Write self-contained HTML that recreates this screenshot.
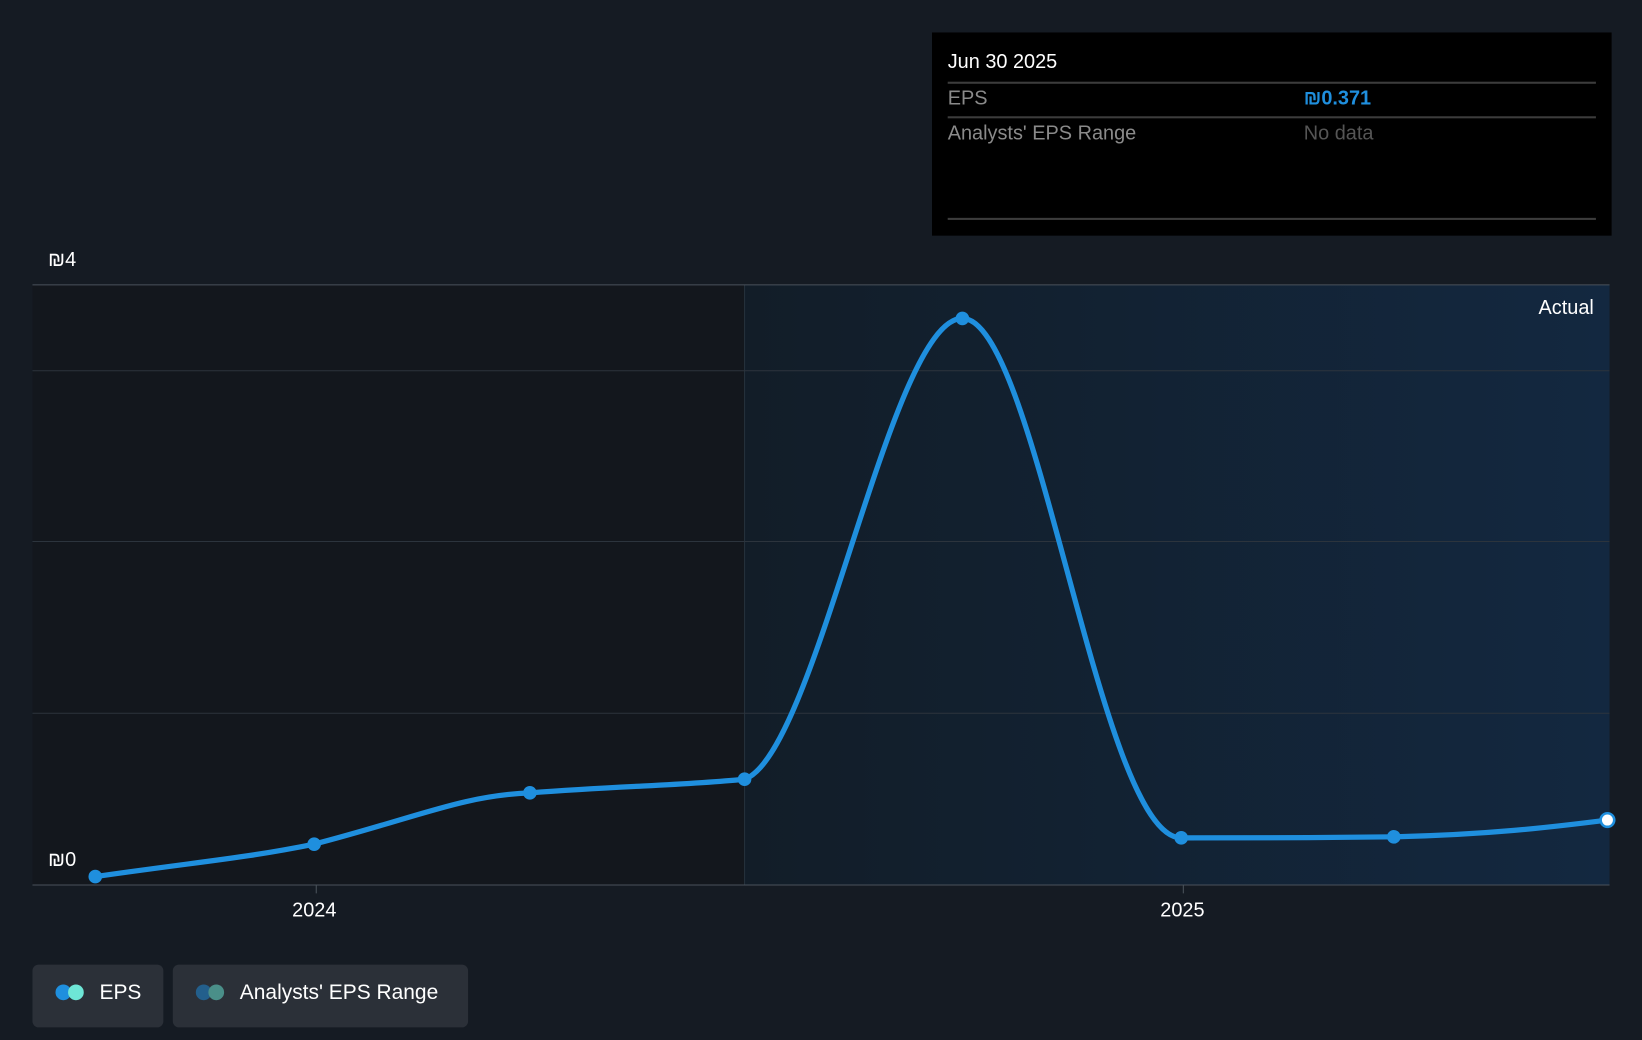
<!DOCTYPE html>
<html><head><style>
html,body{margin:0;padding:0;background:#151b23;width:1642px;height:1040px;overflow:hidden}
#w{position:absolute;left:0;top:0;width:1568px;height:993px;transform:scale(1.04719,1.04733);transform-origin:0 0;font-family:"Liberation Sans",sans-serif;color:#fff}
.t{position:absolute;white-space:nowrap}
</style></head><body><div id="w">
<svg width="1568" height="993" style="position:absolute;left:0;top:0">
<defs><linearGradient id="g" x1="0" x2="1" y1="0" y2="0"><stop offset="0" stop-color="#121d28"/><stop offset="1" stop-color="#132840"/></linearGradient></defs>
<rect x="31" y="272" width="680" height="573" fill="#13171d"/>
<rect x="711" y="272" width="826" height="573" fill="url(#g)"/>
<line x1="711" y1="272" x2="711" y2="845" stroke="#25313c" stroke-width="1"/>
<g stroke="#2c343d" stroke-width="1">
<line x1="31" y1="272" x2="1537" y2="272" stroke="#4a525b"/>
<line x1="31" y1="354" x2="1537" y2="354"/>
<line x1="31" y1="517" x2="1537" y2="517"/>
<line x1="31" y1="681" x2="1537" y2="681"/>
<line x1="31" y1="845" x2="1537" y2="845" stroke="#4a525b"/>
<line x1="302" y1="845" x2="302" y2="853" stroke="#4a525b"/>
<line x1="1130" y1="845" x2="1130" y2="853" stroke="#4a525b"/>
</g>
<path d="M91 837 C195 822 230 820 300 806 C400 780 440 760 506 757 C600 750 650 750 711 744 C780 720 850 304 919 304 C990 304 1050 800 1128 800 C1230 800 1250 800 1331 799 C1420 797 1480 790 1535 783" fill="none" stroke="#1f8fde" stroke-width="5"/>
<g fill="#1f8fde"><circle cx="91" cy="837" r="6.5"/><circle cx="300" cy="806" r="6.5"/><circle cx="506" cy="757" r="6.5"/><circle cx="711" cy="744" r="6.5"/><circle cx="919" cy="304" r="6.5"/><circle cx="1128" cy="800" r="6.5"/><circle cx="1331" cy="799" r="6.5"/></g>
<circle cx="1535" cy="783" r="6.5" fill="#fff" stroke="#1f8fde" stroke-width="2.5"/>
</svg>
<div class="t" style="left:46px;top:238px;font-size:19px">₪4</div>
<div class="t" style="left:46px;top:811px;font-size:19px">₪0</div>
<div class="t" style="right:46px;top:284px;font-size:19px">Actual</div>
<div class="t" style="left:279px;top:859px;font-size:19px">2024</div>
<div class="t" style="left:1108px;top:859px;font-size:19px">2025</div>
<div style="position:absolute;left:890px;top:31px;width:649px;height:194px;background:#000">
<div class="t" style="left:15px;top:18px;font-size:19px">Jun 30 2025</div>
<div style="position:absolute;left:15px;right:15px;top:47px;border-top:2px solid #3c3c3c"></div>
<div class="t" style="left:15px;top:53px;font-size:19px;color:#8a8a8a">EPS</div>
<div class="t" style="left:355px;top:53px;font-size:19px;color:#1f8fde;font-weight:bold">₪0.371</div>
<div style="position:absolute;left:15px;right:15px;top:80px;border-top:2px solid #3c3c3c"></div>
<div class="t" style="left:15px;top:86px;font-size:19px;color:#8a8a8a">Analysts' EPS Range</div>
<div class="t" style="left:355px;top:86px;font-size:19px;color:#555">No data</div>
<div style="position:absolute;left:15px;right:15px;top:177px;border-top:2px solid #3c3c3c"></div>
</div>
<div style="position:absolute;left:31px;top:921px;width:125px;height:60px;background:#2b3038;border-radius:6px">
<span style="position:absolute;left:22px;top:19px;width:15px;height:15px;border-radius:50%;background:#1f8fde"></span>
<span style="position:absolute;left:34px;top:19px;width:15px;height:15px;border-radius:50%;background:#6ee6d6"></span>
<div class="t" style="left:64px;top:16px;font-size:20px">EPS</div></div>
<div style="position:absolute;left:165px;top:921px;width:282px;height:60px;background:#2b3038;border-radius:6px">
<span style="position:absolute;left:22px;top:19px;width:15px;height:15px;border-radius:50%;background:#235f8c"></span>
<span style="position:absolute;left:34px;top:19px;width:15px;height:15px;border-radius:50%;background:#4a8f89"></span>
<div class="t" style="left:64px;top:16px;font-size:20px">Analysts' EPS Range</div></div>
</div></body></html>
